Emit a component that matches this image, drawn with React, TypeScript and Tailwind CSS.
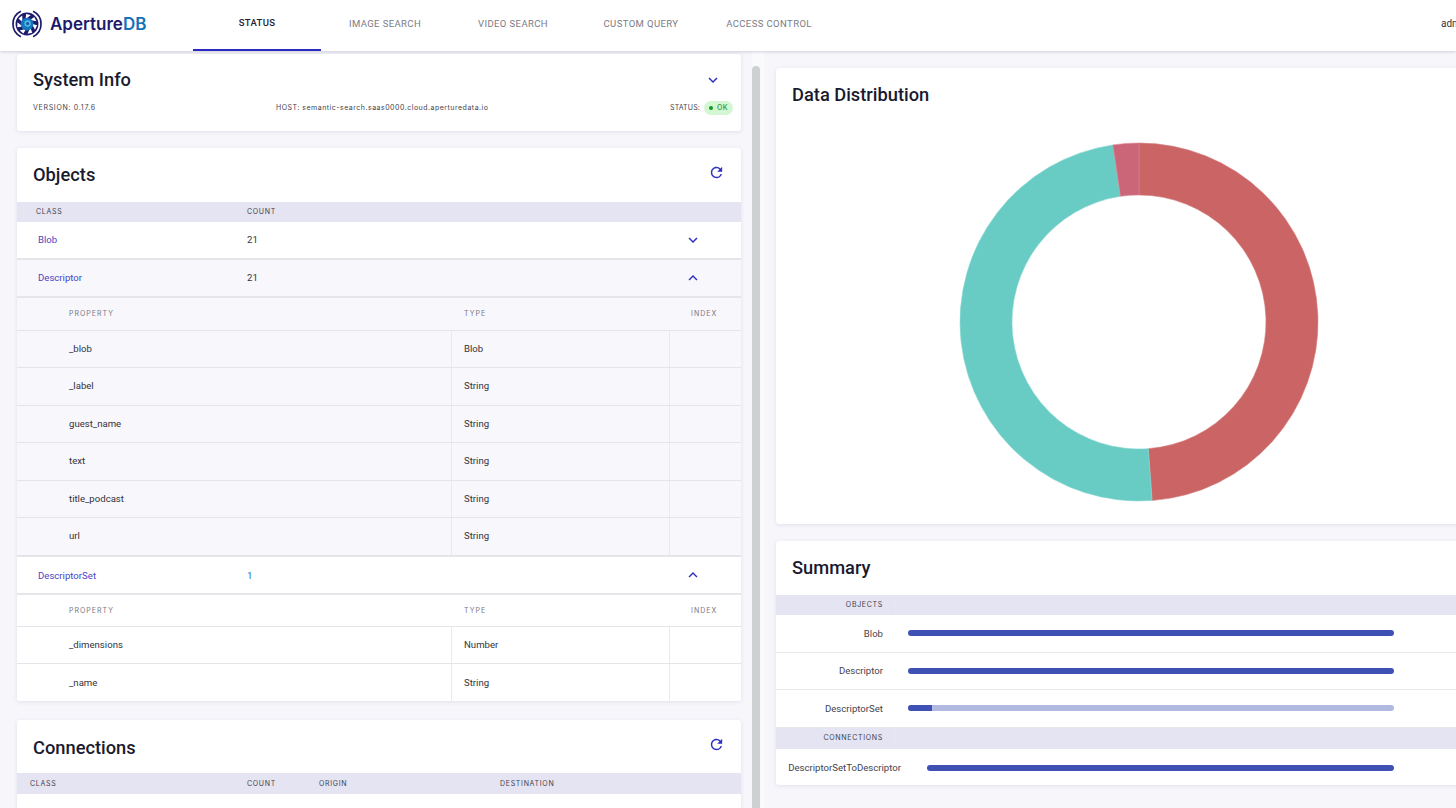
import React from 'react'
import { MdExpandLess, MdExpandMore, MdRefresh } from 'react-icons/md'

const tabs = ['STATUS', 'IMAGE SEARCH', 'VIDEO SEARCH', 'CUSTOM QUERY', 'ACCESS CONTROL']

function Logo() {
  const blades = [0, 51.4, 102.8, 154.2, 205.7, 257.1, 308.5]
  return (
    <svg width="30" height="30" viewBox="0 0 32 32" className="shrink-0">
      <path d="M9.5 2.5A15 15 0 0 0 9.5 29.5" fill="none" stroke="#1d1a6b" strokeWidth="1.8" />
      <path d="M22.5 2.5A15 15 0 0 1 22.5 29.5" fill="none" stroke="#1d1a6b" strokeWidth="1.8" />
      <circle cx="16" cy="16" r="12.2" fill="#1d1a6b" />
      {blades.map((a) => (
        <path key={a} d="M15 5.2L20 6.4L14.5 11Z" fill="#ffffff" transform={`rotate(${a} 16 16)`} />
      ))}
      <circle cx="16" cy="16" r="6.8" fill="#1278bd" />
      <circle cx="16.6" cy="15.4" r="3.4" fill="#58b4e6" />
      <circle cx="16.6" cy="15.4" r="1.6" fill="#0d5a9e" />
    </svg>
  )
}

function Header() {
  return (
    <header className="relative z-10 flex h-[51px] shrink-0 items-stretch bg-white shadow-[0_1px_3px_rgba(30,30,80,0.18)]">
      <div className="flex w-[193px] items-center gap-[8px] pl-3 pb-[3px]">
        <Logo />
        <span className="font-['Inter',sans-serif] text-[17px] font-semibold leading-none text-[#1d1a6b]">
          Aperture<span className="text-[#1273b9]">DB</span>
        </span>
      </div>
      {tabs.map((t, i) => (
        <div
          key={t}
          className={
            i === 0
              ? "flex w-32 items-center justify-center border-b-2 border-[#2a2ac0] pb-[2px] font-['Roboto',sans-serif] text-[9.5px] font-medium tracking-[0.35px] text-[#22223a]"
              : "flex w-32 items-center justify-center pb-[3px] font-['Roboto',sans-serif] text-[9.5px] tracking-[0.4px] text-[#7b7b86]"
          }
        >
          {t}
        </div>
      ))}
      <div className="ml-auto flex w-[15px] items-center overflow-hidden whitespace-nowrap pb-[4px] font-['Roboto',sans-serif] text-[10px] text-[#33333d]">
        admin
      </div>
    </header>
  )
}

function Card({ children, className }: { children: React.ReactNode; className: string }) {
  return <section className={`shrink-0 rounded-[3px] bg-white shadow-[0_1px_4px_rgba(40,40,90,0.1)] ${className}`}>{children}</section>
}

const labelCls = "font-['Inter',sans-serif] text-[7px] tracking-[0.7px]"
const subLabelCls = "font-['Inter',sans-serif] text-[7px] tracking-[1px]"
const propCellCls = "flex items-center font-['Roboto',sans-serif] text-[9.6px]"
const cellCls = `${propCellCls} pt-px`
const titleCls = "font-['Roboto',sans-serif] text-[18.3px] font-medium text-[#1a1a2e]"

function ClassRow({ name, count, open, shaded, countBlue }: { name: string; count: string; open: boolean; shaded?: boolean; countBlue?: boolean }) {
  const Icon = open ? MdExpandLess : MdExpandMore
  return (
    <div className={`grid h-[38px] grid-cols-[217px_435px_72px] border-b-2 border-[#e6e6ea] ${shaded ? 'bg-[#f7f7fc]' : 'bg-white'}`}>
      <div className={`${cellCls} pl-[21px] text-[#4b45c6]`}>{name}</div>
      <div className={`${cellCls} pl-[13px] ${countBlue ? 'text-[#2b6cb8]' : 'text-[#33333d]'}`}>{count}</div>
      <div className="flex items-center pl-[15px]">
        <Icon size={18} color="#2f2fc0" />
      </div>
    </div>
  )
}

function PropTable({ rows, shaded }: { rows: [string, string][]; shaded?: boolean }) {
  const bg = shaded ? 'bg-[#f7f7fc]' : 'bg-white'
  const rowH = shaded ? 'h-[37.4px]' : 'h-[37px]'
  const headH = shaded ? 'h-[33px]' : 'h-[32px]'
  return (
    <div className={bg}>
      <div className={`grid ${headH} grid-cols-[434px_218px_72px] items-center border-b border-[#e4e4e9] pt-px text-[#77777f]`}>
        <div className={`${subLabelCls} pl-[52px]`}>PROPERTY</div>
        <div className={`${subLabelCls} pl-[13px]`}>TYPE</div>
        <div className={`${subLabelCls} pl-[22px]`}>INDEX</div>
      </div>
      {rows.map(([prop, type]) => (
        <div key={prop} className={`grid ${rowH} grid-cols-[434px_218px_72px] border-b border-[#e4e4e9] text-[#33333d] last:border-b-0`}>
          <div className={`${propCellCls} pl-[52px]`}>{prop}</div>
          <div className={`${propCellCls} border-l border-[#e9e9f1] pl-[12px]`}>{type}</div>
          <div className="border-l border-[#e9e9f1]" />
        </div>
      ))}
    </div>
  )
}

function Left() {
  return (
    <div className="flex w-[752px] shrink-0 flex-col gap-[17px] overflow-hidden pl-[17px] pr-[11px] pt-[3px]">
      <Card className="h-[77px] px-4 pt-[15px]">
        <div className="flex items-center justify-between">
          <h2 className={`${titleCls} leading-[22px]`}>System Info</h2>
          <MdExpandMore size={18} color="#2f2fc0" className="mr-[3px]" />
        </div>
        <div className={`${labelCls} mt-[10px] grid grid-cols-[243px_394px_1fr] items-center tracking-[0.6px] text-[#44444f]`}>
          <span>VERSION: 0.17.6</span>
          <span className="tracking-[0.5px]">HOST: semantic-search.saas0000.cloud.aperturedata.io</span>
          <span className="flex items-center gap-[4px] whitespace-nowrap tracking-[0.15px]">
            STATUS:
            <span className="flex h-[14px] items-center gap-[4px] rounded-full bg-[#d3f6d3] px-[5px] font-medium tracking-[0.5px] text-[#2a9a35]">
              <span className="size-1 rounded-full bg-[#149a1e]" />
              OK
            </span>
          </span>
        </div>
      </Card>

      <Card className="overflow-hidden">
        <div className="flex h-[54px] items-center justify-between pl-4 pr-[16px]">
          <h2 className={titleCls}>Objects</h2>
          <MdRefresh size={17} color="#2f2fc0" className="mb-[6px]" />
        </div>
        <div className="grid h-[20px] grid-cols-[217px_435px_72px] items-center bg-[#e4e4f2] text-[#3f3f4d]">
          <div className={`${labelCls} pl-[19px]`}>CLASS</div>
          <div className={`${labelCls} border-l border-[#e7e7f3] pl-[12px]`}>COUNT</div>
          <div className="h-full border-l border-[#e7e7f3]" />
        </div>
        <ClassRow name="Blob" count="21" open={false} />
        <ClassRow name="Descriptor" count="21" open shaded />
        <PropTable
          shaded
          rows={[
            ['_blob', 'Blob'],
            ['_label', 'String'],
            ['guest_name', 'String'],
            ['text', 'String'],
            ['title_podcast', 'String'],
            ['url', 'String'],
          ]}
        />
        <div className="h-[2px] bg-[#e4e4e9]" />
        <ClassRow name="DescriptorSet" count="1" open countBlue />
        <PropTable
          rows={[
            ['_dimensions', 'Number'],
            ['_name', 'String'],
          ]}
        />
      </Card>

      <Card className="mt-[2px] overflow-hidden">
        <div className="flex h-[53px] items-center justify-between pl-4 pr-[16px] pt-[2px]">
          <h2 className={titleCls}>Connections</h2>
          <MdRefresh size={17} color="#2f2fc0" className="mb-[6px]" />
        </div>
        <div className="grid h-[21px] grid-cols-[217px_72px_181px_182px_72px] items-center bg-[#e4e4f2] pt-px text-[#3f3f4d]">
          <div className={`${labelCls} pl-[13px]`}>CLASS</div>
          <div className={`${labelCls} border-l border-[#e7e7f3] pl-[12px]`}>COUNT</div>
          <div className={`${labelCls} border-l border-[#e7e7f3] pl-[12px]`}>ORIGIN</div>
          <div className={`${labelCls} border-l border-[#e7e7f3] pl-[12px]`}>DESTINATION</div>
          <div className="h-full border-l border-[#e7e7f3]" />
        </div>
        <div className="h-[38px] bg-white" />
      </Card>
    </div>
  )
}

function arc(r: number, a: number) {
  const t = (a * Math.PI) / 180
  return [r * Math.sin(t), -r * Math.cos(t)]
}

function slice(from: number, to: number) {
  const R = 179
  const r = 127
  const [x1, y1] = arc(R, from)
  const [x2, y2] = arc(R, to)
  const [x3, y3] = arc(r, to)
  const [x4, y4] = arc(r, from)
  const large = to - from > 180 ? 1 : 0
  return `M${x1} ${y1}A${R} ${R} 0 ${large} 1 ${x2} ${y2}L${x3} ${y3}A${r} ${r} 0 ${large} 0 ${x4} ${y4}Z`
}

function Donut() {
  return (
    <svg width="360" height="360" viewBox="-180 -180 360 360">
      <path d={slice(0, 175.8)} fill="#cb6464" stroke="#d47e7e" strokeWidth="0.6" />
      <path d={slice(175.8, 351.6)} fill="#68ccc5" stroke="#8ad8d2" strokeWidth="0.6" />
      <path d={slice(351.6, 360)} fill="#cb6678" stroke="#d98a97" strokeWidth="0.6" />
    </svg>
  )
}

function Bar({ pct }: { pct: number }) {
  return (
    <div className="h-[6px] flex-1 overflow-hidden rounded-full bg-[#b2b9e0]">
      <div className="h-full bg-[#3f51b5]" style={{ width: `${pct}%` }} />
    </div>
  )
}

function SummaryRow({ name, pct }: { name: string; pct: number }) {
  return (
    <div className="flex h-[37.5px] items-center border-b border-[#e8e8ec] last:border-b-0">
      <div className={`${cellCls} w-[107px] justify-end text-[#44444f]`}>{name}</div>
      <div className="ml-[25px] flex w-[486px]">
        <Bar pct={pct} />
      </div>
    </div>
  )
}

function SummaryHead({ label, height }: { label: string; height: string }) {
  return (
    <div className={`flex ${height} items-center bg-[#e4e4f2] text-[#3f3f4d]`}>
      <div className={`${labelCls} w-[107px] text-right`}>{label}</div>
      <div className="ml-3 h-full border-l border-[#e7e7f3]" />
    </div>
  )
}

function Right() {
  return (
    <div className="flex flex-1 flex-col gap-[17px] overflow-hidden pl-3 pt-[17px]">
      <Card className="h-[456px] w-[720px]">
        <h2 className={`${titleCls} pl-4 pt-[16px] leading-[22px]`}>Data Distribution</h2>
        <div className="ml-[183px] mt-[36px] w-[360px]">
          <Donut />
        </div>
      </Card>
      <Card className="w-[720px] overflow-hidden">
        <div className="flex h-[54px] items-center pl-4">
          <h2 className={titleCls}>Summary</h2>
        </div>
        <SummaryHead label="OBJECTS" height="h-[20px]" />
        <SummaryRow name="Blob" pct={100} />
        <SummaryRow name="Descriptor" pct={100} />
        <SummaryRow name="DescriptorSet" pct={5} />
        <SummaryHead label="CONNECTIONS" height="h-[21px]" />
        <div className="flex h-[36px] items-center pt-[2px]">
          <div className={`${cellCls} w-[125px] justify-end whitespace-nowrap text-[#44444f]`}>DescriptorSetToDescriptor</div>
          <div className="ml-[26px] flex w-[467px]">
            <Bar pct={100} />
          </div>
        </div>
      </Card>
    </div>
  )
}

export default function App() {
  return (
    <div className="flex h-[808px] w-[1456px] flex-col overflow-hidden bg-[#f6f6fb]">
      <Header />
      <div className="flex min-h-0 flex-1">
        <Left />
        <div className="w-3 shrink-0 bg-[#fafafd] pr-1 pt-[15px]">
          <div className="h-full rounded-t-full bg-[#cdd1d2]" />
        </div>
        <Right />
      </div>
    </div>
  )
}
